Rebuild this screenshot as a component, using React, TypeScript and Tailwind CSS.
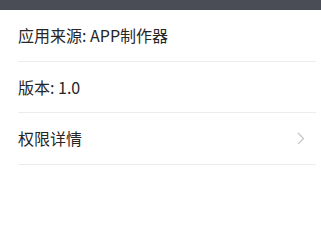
export default function App() {
  const rows = [
    { label: "应用来源: APP制作器", arrow: false },
    { label: "版本: 1.0", arrow: false },
    { label: "权限详情", arrow: true },
  ];
  return (
    <div
      className="w-[321px] h-[201px] bg-white overflow-hidden"
      style={{ fontFamily: '"Noto Sans CJK SC", "Noto Sans", sans-serif' }}
    >
      <div className="h-[10px] bg-[#4b4d56]" />
      <div className="pl-[18px]">
        {rows.map((r) => (
          <div
            key={r.label}
            className="h-[51.5px] flex items-center justify-between border-b border-[#ececec] mr-[5px]"
          >
            <span className="text-[16px] text-[#262626] leading-none">{r.label}</span>
            {r.arrow && (
              <svg width="8" height="13" viewBox="0 0 8 13" className="mr-[11px]">
                <path d="M1 1l5.5 5.5L1 12" fill="none" stroke="#c4c4c4" strokeWidth="1.2" />
              </svg>
            )}
          </div>
        ))}
      </div>
    </div>
  );
}
